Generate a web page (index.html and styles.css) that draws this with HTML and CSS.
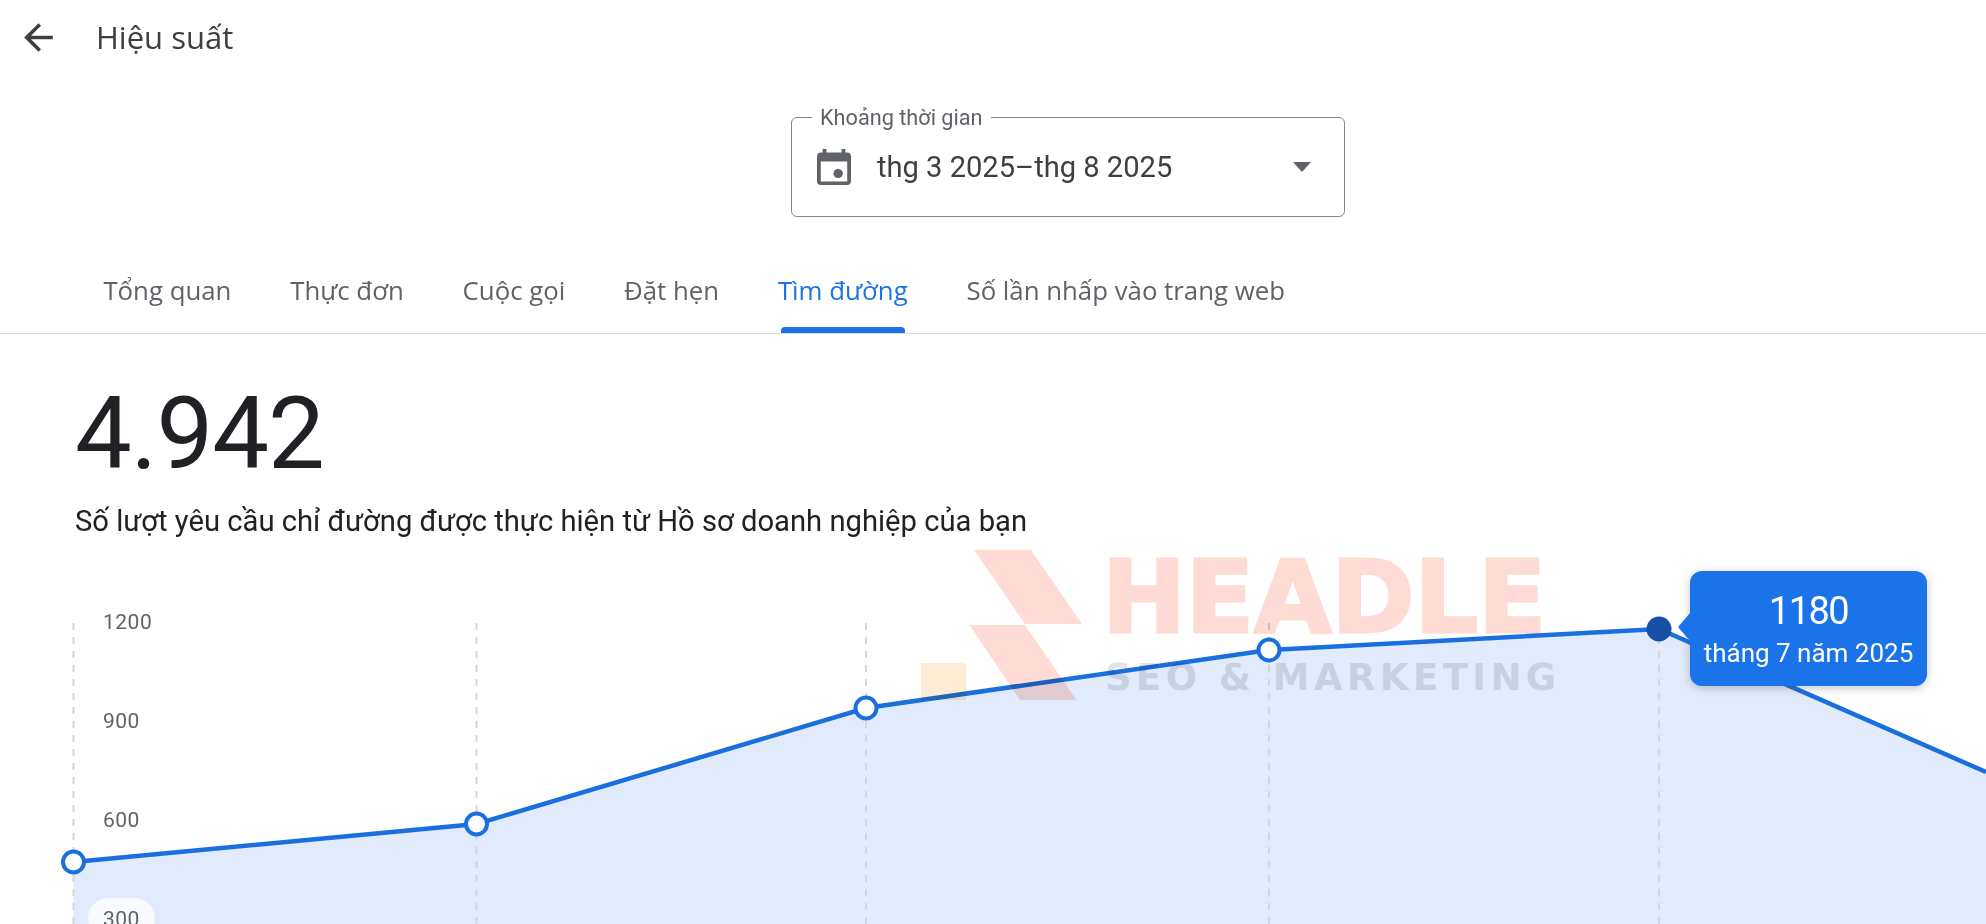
FILE: index.html
```html
<!DOCTYPE html>
<html lang="vi">
<head>
  <meta charset="UTF-8"/>
  <meta name="viewport" content="width=device-width,initial-scale=1.0"/>
  <title>Hiệu suất</title>
  <link rel="stylesheet" href="styles.css">
</head>
<body>

<header class="topbar">
  <svg class="back-icon" viewBox="0 0 24 24"><path d="M20 11H7.83l5.59-5.59L12 4l-8 8 8 8 1.41-1.41L7.83 13H20v-2z"/></svg>
  <h1 class="page-title">Hiệu suất</h1>
</header>

<div class="date-field">
  <span class="date-label">Khoảng thời gian</span>
  <svg class="calendar-icon" viewBox="3 1 18 20" preserveAspectRatio="none"><path d="M16 1v2H8V1H6v2H5c-1.11 0-1.99.9-1.99 2L3 19c0 1.1.89 2 2 2h14c1.1 0 2-.9 2-2V5c0-1.1-.9-2-2-2h-1V1h-2zm3 18H5V8h14v11z"/><circle cx="14.2" cy="14.6" r="2.5"/></svg>
  <span class="date-value">thg 3 2025–thg 8 2025</span>
  <span class="date-caret"></span>
</div>

<nav class="tabs">
  <a class="tab">Tổng quan</a>
  <a class="tab">Thực đơn</a>
  <a class="tab">Cuộc gọi</a>
  <a class="tab">Đặt hẹn</a>
  <a class="tab active">Tìm đường</a>
  <a class="tab">Số lần nhấp vào trang web</a>
</nav>

<section class="stat">
  <div class="stat-value">4.942</div>
  <p class="stat-caption">Số lượt yêu cầu chỉ đường được thực hiện từ Hồ sơ doanh nghiệp của bạn</p>
</section>

<section class="chart">
  <svg class="plot" viewBox="0 0 1986 374">
    <polygon class="area" points="73.5,312 476.5,274 866,158 1269,100 1659,79 1986,222 1986,374 73.5,374"/>
    <g class="guides">
      <line x1="73.5" y1="73" x2="73.5" y2="374"/>
      <line x1="476.5" y1="73" x2="476.5" y2="374"/>
      <line x1="866" y1="73" x2="866" y2="374"/>
      <line x1="1269" y1="73" x2="1269" y2="374"/>
      <line x1="1659" y1="73" x2="1659" y2="374"/>
    </g>
    <polyline class="trend" points="73.5,312 476.5,274 866,158 1269,100 1659,79 1986,222"/>
    <circle class="dot" cx="73.5" cy="312" r="10.5"/>
    <circle class="dot" cx="476.5" cy="274" r="10.5"/>
    <circle class="dot" cx="866" cy="158" r="10.5"/>
    <circle class="dot" cx="1269" cy="100" r="10.5"/>
    <circle class="dot-active" cx="1659" cy="79" r="12.5"/>
  </svg>

  <div class="axis">
    <span class="axis-label">1200</span>
    <span class="axis-label">900</span>
    <span class="axis-label">600</span>
    <span class="axis-label pill">300</span>
  </div>

  <div class="watermark">
    <svg class="wm-logo" viewBox="0 0 170 150">
      <rect class="wm-square" x="0" y="113" width="45" height="37"/>
      <polygon class="wm-mark" points="53,0 110,0 161,74 104,74"/>
      <polygon class="wm-mark" points="48.5,75 104,75 155.5,150 99,150"/>
    </svg>
    <span class="wm-name">HEADLE</span>
    <span class="wm-sub">SEO &amp; MARKETING</span>
  </div>

  <div class="tooltip">
    <div class="tooltip-value">1180</div>
    <div class="tooltip-date">tháng 7 năm 2025</div>
  </div>
</section>

</body>
</html>
```

FILE: styles.css
```css
* {
  margin: 0;
  padding: 0;
  box-sizing: border-box;
}

html, body {
  height: 924px;
  overflow: hidden;
}

body {
  font-family: Roboto, "Noto Sans", sans-serif;
  background: #fff;
  color: #202124;
}

.topbar {
  display: flex;
  align-items: center;
  height: 74px;
  padding-left: 17px;
}

.back-icon {
  width: 43px;
  height: 43px;
  fill: #3c4043;
}

.page-title {
  margin-left: 36px;
  font-family: "Open Sans", sans-serif;
  font-size: 31px;
  font-weight: 400;
  color: #3c4043;
}

.date-field {
  position: relative;
  display: flex;
  align-items: center;
  width: 554px;
  height: 100px;
  margin: 43px 0 0 791px;
  padding: 0 33px 0 25px;
  border: 1px solid #80868b;
  border-radius: 6px;
}

.date-label {
  position: absolute;
  top: -13px;
  left: 20px;
  padding: 0 8px;
  background: #fff;
  font-size: 21.7px;
  color: #5f6368;
}

.calendar-icon {
  width: 34px;
  height: 36px;
  fill: #5f6368;
}

.date-value {
  margin-left: 26px;
  font-size: 29.1px;
  color: #3c4043;
}

.date-caret {
  margin-left: auto;
  border-left: 9.5px solid transparent;
  border-right: 9.5px solid transparent;
  border-top: 10px solid #5f6368;
}

.tabs {
  display: flex;
  height: 117px;
  padding: 29px 0 0 74px;
  border-bottom: 1px solid #dadce0;
}

.tab {
  position: relative;
  display: flex;
  align-items: center;
  padding: 0 29.4px;
  font-family: "Open Sans", sans-serif;
  font-size: 25.8px;
  font-weight: 500;
  color: #5f6368;
}

.tab.active {
  color: #1a73e8;
}

.tab.active::after {
  content: "";
  position: absolute;
  left: 32px;
  right: 32px;
  bottom: 0;
  height: 6px;
  background: #1a73e8;
  border-radius: 4px 4px 0 0;
}

.stat {
  padding: 42px 0 0 75px;
}

.stat-value {
  font-size: 101px;
  line-height: 115px;
  letter-spacing: -1px;
}

.stat-caption {
  margin-top: 12px;
  font-size: 29.2px;
  line-height: 36px;
}

.chart {
  position: absolute;
  top: 550px;
  left: 0;
  width: 1986px;
  height: 374px;
}

.plot {
  display: block;
  width: 1986px;
  height: 374px;
}

.area {
  fill: #e1ebfb;
}

.guides line {
  stroke: #d4d6da;
  stroke-width: 2;
  stroke-dasharray: 7 7;
}

.trend {
  fill: none;
  stroke: #1a6fdf;
  stroke-width: 4.5;
}

.dot {
  fill: #fff;
  stroke: #1a6fdf;
  stroke-width: 4;
}

.dot-active {
  fill: #174ea6;
}

.axis {
  position: absolute;
  top: 48px;
  left: 88px;
  display: flex;
  flex-direction: column;
  gap: 57.9px;
}

.axis-label {
  align-self: flex-start;
  width: 67px;
  height: 41px;
  padding-left: 15px;
  border-radius: 21px;
  font-size: 21px;
  line-height: 49px;
  letter-spacing: .5px;
  color: #5f6368;
}

.axis-label.pill {
  margin-top: 3px;
  line-height: 43px;
  background: rgba(255, 255, 255, 0.75);
}

.watermark {
  position: absolute;
  top: 0;
  left: 921px;
  width: 640px;
  height: 150px;
  mix-blend-mode: multiply;
}

.wm-logo {
  display: block;
  width: 170px;
  height: 150px;
}

.wm-mark {
  fill: #ffdbd5;
}

.wm-square {
  fill: #fdebd3;
}

.wm-name {
  position: absolute;
  top: 3px;
  left: 181px;
  font-family: "DejaVu Sans", sans-serif;
  font-size: 100px;
  line-height: 90px;
  font-weight: 700;
  -webkit-text-stroke: 3px #ffdbd5;
  color: #ffdbd5;
}

.wm-sub {
  position: absolute;
  top: 111px;
  left: 184px;
  font-family: "DejaVu Sans", sans-serif;
  font-size: 37px;
  line-height: 34px;
  font-weight: 700;
  letter-spacing: 4.4px;
  white-space: nowrap;
  color: #e2e3e6;
}

.tooltip {
  position: absolute;
  top: 21px;
  left: 1690px;
  width: 237px;
  height: 115px;
  padding-top: 17px;
  background: #1a73e8;
  border-radius: 12px;
  box-shadow: 0 2px 8px rgba(60, 64, 67, 0.3);
  color: #fff;
  text-align: center;
}

.tooltip::before {
  content: "";
  position: absolute;
  top: 42px;
  left: -12px;
  border-top: 14px solid transparent;
  border-bottom: 14px solid transparent;
  border-right: 12px solid #1a73e8;
}

.tooltip-value {
  font-size: 38px;
  line-height: 46px;
  letter-spacing: -1.5px;
}

.tooltip-date {
  margin-top: 3px;
  font-size: 26px;
  line-height: 32px;
}
```
